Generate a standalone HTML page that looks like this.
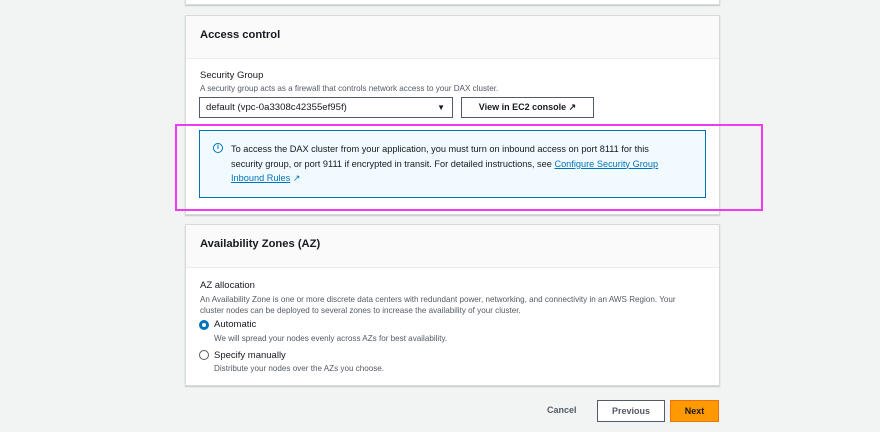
<!DOCTYPE html>
<html><head><style>
body{margin:0;width:880px;height:432px;background:#f2f3f3;font-family:"Liberation Sans",sans-serif;color:#16191f;position:relative;overflow:hidden}
.a{position:absolute}
.card{position:absolute;left:185px;width:535px;background:#fff;border:1px solid #d5dbdb;box-sizing:border-box;box-shadow:0 1px 1px rgba(0,28,36,.2)}
.hd{background:#fafafa;border-bottom:1px solid #eaeded;height:43px;box-sizing:border-box;padding:13px 14px;font-weight:bold;font-size:11.2px}
.lab{font-size:9.5px}
.desc{font-size:8.1px;color:#545b64}
.btn{position:absolute;border:1px solid #545b64;background:#fff;font-weight:bold;font-size:9px;box-sizing:border-box;text-align:center}
a{color:#0073bb;text-decoration:underline}
</style></head><body>
<div class="card" style="top:-10px;height:15px"></div>
<div class="card" style="top:15px;height:200px">
 <div class="hd">Access control</div>
 <div class="a lab" style="left:14px;top:54px">Security Group</div>
 <div class="a desc" style="left:14px;top:68px">A security group acts as a firewall that controls network access to your DAX cluster.</div>
 <div class="a" style="left:13px;top:81px;width:254px;height:21px;border:1px solid #545b64;box-sizing:border-box;font-size:9.6px;padding:4px 6px">default (vpc-0a3308c42355ef95f)<span style="position:absolute;right:7px;top:5px;font-size:8px">▼</span></div>
 <div class="btn" style="left:275px;top:81px;width:133px;height:21px;padding-top:4px">View in EC2 console ↗</div>
 <div class="a" style="left:13px;top:114px;width:507px;height:68px;background:#f1faff;border:1px solid #0073bb;box-sizing:border-box;font-size:9.2px;line-height:14.5px;padding:11px 36px 0 31px">
  <span class="a" style="left:13px;top:12px;width:8px;height:8px;border:1.5px solid #0073bb;border-radius:50%;font-size:7px;line-height:8px;text-align:center;color:#0073bb;font-weight:bold">i</span>
  To access the DAX cluster from your application, you must turn on inbound access on port 8111 for this security group, or port 9111 if encrypted in transit. For detailed instructions, see <a>Configure Security Group Inbound Rules</a> <span style="color:#0073bb">↗</span>
 </div>
</div>
<div class="a" style="left:175px;top:124px;width:588px;height:87px;border:2px solid #f03cf0;box-sizing:border-box"></div>
<div class="card" style="top:224px;height:162px">
 <div class="hd" style="padding-top:13px">Availability Zones (AZ)</div>
 <div class="a lab" style="left:14px;top:55px">AZ allocation</div>
 <div class="a desc" style="left:14px;top:69px;width:500px;line-height:11px">An Availability Zone is one or more discrete data centers with redundant power, networking, and connectivity in an AWS Region. Your cluster nodes can be deployed to several zones to increase the availability of your cluster.</div>
 <div class="a" style="left:13px;top:95px;width:10px;height:10px;border-radius:50%;background:#0073bb;box-sizing:border-box;border:3px solid #0073bb"><div style="width:4px;height:4px;background:#fff;border-radius:50%"></div></div>
 <div class="a lab" style="left:28px;top:94px">Automatic</div>
 <div class="a desc" style="left:28px;top:109px">We will spread your nodes evenly across AZs for best availability.</div>
 <div class="a" style="left:13px;top:125px;width:10px;height:10px;border-radius:50%;border:1px solid #545b64;box-sizing:border-box"></div>
 <div class="a lab" style="left:28px;top:125px">Specify manually</div>
 <div class="a desc" style="left:28px;top:139px">Distribute your nodes over the AZs you choose.</div>
</div>
<div class="a" style="left:547px;top:405px;font-size:9px;font-weight:bold;color:#545b64">Cancel</div>
<div class="btn" style="left:597px;top:400px;width:68px;height:22px;padding-top:5px;color:#545b64">Previous</div>
<div class="btn" style="left:670px;top:400px;width:49px;height:22px;padding-top:5px;background:#ff9900;border-color:#ec7211">Next</div>
</body></html>
